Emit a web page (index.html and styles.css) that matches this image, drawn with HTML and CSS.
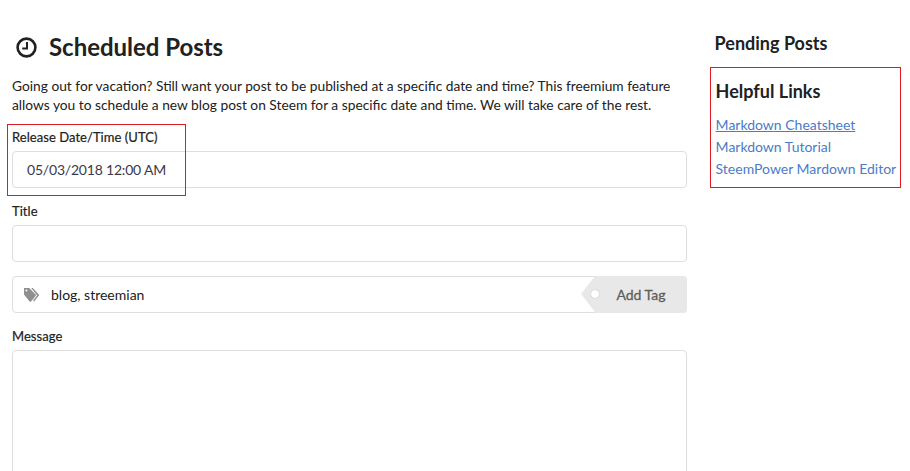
FILE: index.html
```html
<!DOCTYPE html>
<html lang="en">
<head>
<meta charset="utf-8">
<title>Scheduled Posts</title>
<link rel="stylesheet" href="styles.css">
</head>
<body>
<div class="page">
  <main class="main">
    <h1 class="title">
      <svg class="clock" width="21" height="21" viewBox="0 0 21 21" aria-hidden="true"><circle cx="10.5" cy="10.5" r="8.9" fill="none" stroke="#212121" stroke-width="2.6"/><path d="M11 5v6.4H6.2" fill="none" stroke="#212121" stroke-width="2"/></svg>
      Scheduled Posts
    </h1>
    <p class="intro">Going out for vacation? Still want your post to be published at a specific date and time? This freemium feature allows you to schedule a new blog post on Steem for a specific date and time. We will take care of the rest.</p>
    <div class="field">
      <label class="label">Release Date/Time (UTC)</label>
      <div class="input date">05/03/2018 12:00 AM</div>
      <div class="mark"></div>
    </div>
    <div class="field">
      <label class="label">Title</label>
      <div class="input"></div>
    </div>
    <div class="tagrow">
      <svg class="tagicon" width="15" height="14" viewBox="0 0 15 14" aria-hidden="true"><path d="M0 0h5.2l6.4 6.6a1 1 0 0 1 0 1.4l-4.6 5.4a1 1 0 0 1-1.4 0L0 6.4z" fill="#8f8f8f"/><path d="M7.2 0h1.6l6 6.4a1 1 0 0 1 0 1.4l-4.8 5.6-1-.9 4.2-5.1z" fill="#8f8f8f"/><circle cx="2.4" cy="2.6" r="1" fill="#fff"/></svg>
      <span class="tagtext">blog, streemian</span>
      <div class="addtag"><span class="hole"></span>Add Tag</div>
    </div>
    <div class="field">
      <label class="label">Message</label>
      <div class="input message"></div>
    </div>
  </main>
  <aside class="side">
    <h2 class="pending">Pending Posts</h2>
    <section class="links">
      <h2 class="linkhead">Helpful Links</h2>
      <a class="link hover" href="#">Markdown Cheatsheet</a>
      <a class="link" href="#">Markdown Tutorial</a>
      <a class="link" href="#">SteemPower Mardown Editor</a>
    </section>
  </aside>
</div>
</body>
</html>
```
FILE: styles.css
```css
* { box-sizing: border-box; }
html, body { margin: 0; height: 471px; overflow: hidden; background: #fff; }
body { font: 14px/20px Lato, "Open Sans", sans-serif; color: #212121; }
.page { display: flex; padding: 0 9px 0 12px; }
.main { width: 675px; flex: none; }
.side { margin-left: 23px; width: 191px; }
.title { display: flex; align-items: center; gap: 12px; margin: 32px 0 0 4px; font-size: 24px; line-height: 30px; font-weight: 700; letter-spacing: -0.03px; }
.intro { margin: 14px 0 0; font-size: 13.75px; line-height: 19px; }
.field { position: relative; margin-top: 13px; }
.label { display: block; font-size: 13px; line-height: 20px; letter-spacing: 0.05px; -webkit-text-stroke: 0.2px #212121; margin-bottom: 4px; }
.input { height: 37px; border: 1px solid #dedede; border-radius: 4px; background: #fff; }
.date { padding: 8px 14px; color: #3a3a4a; letter-spacing: -0.2px; }
.mark { position: absolute; left: -5px; top: -3px; width: 179px; height: 72px; border: 1px solid #e01b24; }
.field + .field { margin-top: 13px; }
.tagrow { display: flex; align-items: center; height: 37px; margin-top: 14px; border: 1px solid #dedede; border-radius: 4px; position: relative; padding-left: 11px; }
.tagtext { margin-left: 12px; }
.tagicon { flex: none; }
.addtag { position: absolute; right: -1px; top: -1px; bottom: -1px; width: 92px; display: flex; align-items: center; justify-content: center; background: #e8e8e8; border-radius: 0 4px 4px 0; color: #5e5e5e; font-size: 14px; -webkit-text-stroke: 0.3px #5e5e5e; }
.addtag::before { content: ""; position: absolute; left: -14px; top: 0; border-style: solid; border-width: 18.5px 14px 18.5px 0; border-color: transparent #e8e8e8 transparent transparent; }
.hole { position: absolute; left: -4px; top: 14px; width: 8px; height: 8px; border-radius: 50%; background: #fff; box-shadow: 0 0 1px #999; }
.tagrow + .field { margin-top: 13px; }
.message { height: 140px; }
.pending { margin: 30px 0 0 4.6px; font-size: 18px; line-height: 26px; font-weight: 700; }
.links { margin-top: 11px; margin-left: 0; height: 121px; border: 1px solid #e01b24; padding: 10px 4px 0 4.6px; }
.linkhead { margin: 0 0 10px; font-size: 18px; line-height: 26px; font-weight: 700; }
.link { display: block; line-height: 22px; color: #4a7cc7; text-decoration: none; white-space: nowrap; }
.hover { text-decoration: underline; }
```
